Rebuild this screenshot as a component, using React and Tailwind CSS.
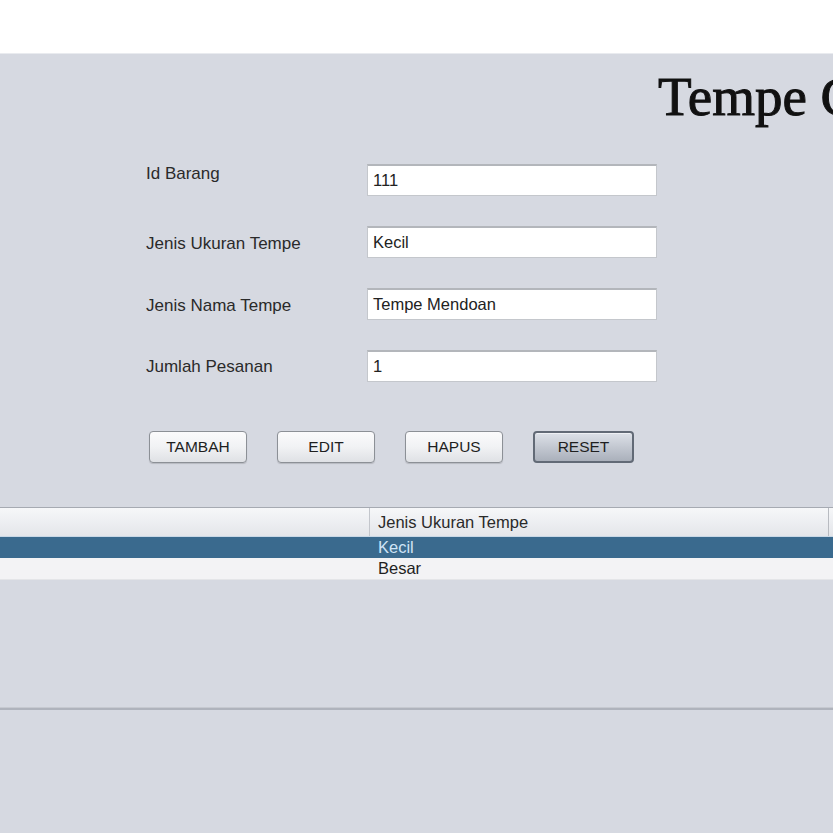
import React from 'react';

const fields = [
  { label: 'Id Barang', value: '111', labelShift: '-mt-[12px]' },
  { label: 'Jenis Ukuran Tempe', value: 'Kecil', labelShift: 'mt-[3px]' },
  { label: 'Jenis Nama Tempe', value: 'Tempe Mendoan', labelShift: 'mt-[3px]' },
  { label: 'Jumlah Pesanan', value: '1', labelShift: 'mt-[2px]' },
];

const buttons = ['TAMBAH', 'EDIT', 'HAPUS', 'RESET'];

export default function App() {
  return (
    <div className="w-[833px] h-[833px] overflow-hidden bg-[#d6d9e1] font-['Liberation_Sans',Arial,sans-serif] text-[#222]">
      {/* top white strip */}
      <div className="h-[54px] bg-white border-b border-[#e9ebef]"></div>

      {/* title */}
      <div className="h-[110px] pt-[12px] pl-[658px] whitespace-nowrap overflow-hidden">
        <span className="font-['Liberation_Serif','Times_New_Roman',serif] text-[55px] leading-[62px] text-[#111] [-webkit-text-stroke:1px_#111]">
          Tempe Chips
        </span>
      </div>

      {/* form */}
      <div className="flex flex-col gap-[30px]">
        {fields.map((f) => (
          <div key={f.label} className="flex items-center h-[32px]">
            <div className={`w-[367px] pl-[146px] text-[17px] text-[#2a2a2a] ${f.labelShift}`}>{f.label}</div>
            <div className="w-[290px] h-[32px] bg-white border border-[#c4c7cc] border-t-2 border-t-[#b3b6bb] flex items-center px-[5px] text-[16.5px] text-[#222]">
              {f.value}
            </div>
          </div>
        ))}
      </div>

      {/* buttons */}
      <div className="flex gap-[30px] pl-[149px] mt-[49px]">
        {buttons.map((b) =>
          b === 'RESET' ? (
            <div
              key={b}
              className="w-[101px] h-[32px] rounded-[4px] border-2 border-[#626a76] bg-gradient-to-b from-[#dde1e8] via-[#c3c8d1] to-[#aab0bb] flex items-center justify-center text-[15.5px] text-[#1f1f1f] shadow-[inset_0_1px_0_#eef0f4]"
            >
              {b}
            </div>
          ) : (
            <div
              key={b}
              className="w-[98px] h-[32px] rounded-[4px] border border-[#8c9096] bg-gradient-to-b from-[#fbfbfc] via-[#f1f2f4] to-[#dfe1e5] flex items-center justify-center text-[15.5px] text-[#1f1f1f] shadow-[0_1px_1px_rgba(0,0,0,0.15)]"
            >
              {b}
            </div>
          )
        )}
      </div>

      {/* table */}
      <div className="mt-[44px]">
        <div className="flex h-[30px] border-t border-[#a6aab2] border-b border-b-[#c9d8e6] bg-gradient-to-b from-[#f6f7f9] to-[#e4e6ea]">
          <div className="w-[370px] border-r border-[#c3c6cc]"></div>
          <div className="w-[459px] border-r border-[#b8bbc1] flex items-center pl-[8px] text-[16.5px] text-[#2a2a2a]">
            Jenis Ukuran Tempe
          </div>
          <div className="flex-1"></div>
        </div>
        <div className="h-[21px] bg-[#3a6a8e] flex items-center pl-[378px] text-[16.5px] text-[#cfe4f6]">Kecil</div>
        <div className="h-[22px] bg-[#f3f3f5] border-b border-[#e4e5e8] flex items-center pl-[378px] text-[16.5px] text-[#1f1f1f]">
          Besar
        </div>
      </div>

      {/* separator */}
      <div className="mt-[127px] h-[3px] border-t border-[#c6c9d0] bg-[#afb3bc]"></div>
    </div>
  );
}
